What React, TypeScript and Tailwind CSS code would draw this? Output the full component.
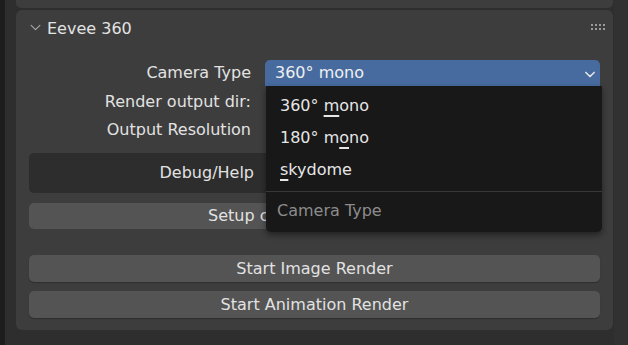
const FONT = { fontFamily: '"DejaVu Sans", "Noto Sans", sans-serif' };

const OPTIONS: { before: string; key: string; after: string }[] = [
  { before: "360° ", key: "m", after: "ono" },
  { before: "180° m", key: "o", after: "no" },
  { before: "", key: "s", after: "kydome" },
];

function Chevron({ className, width = 1.3 }: { className?: string; width?: number }) {
  return (
    <svg viewBox="0 0 12 8" className={className} fill="none" stroke="currentColor" strokeWidth={width}>
      <polyline points="1,1.5 6,6.5 11,1.5" strokeLinecap="round" strokeLinejoin="round" />
    </svg>
  );
}

function Row({ label, children }: { label: string; children?: React.ReactNode }) {
  return (
    <div className="flex h-[26px] items-center">
      <div className="w-[236px] shrink-0 pr-[14px] text-right">{label}</div>
      <div className="flex-1">{children}</div>
    </div>
  );
}

function Button({ label }: { label: string }) {
  return (
    <div className="flex h-[27px] items-center justify-center rounded-[5px] bg-[#545454] shadow-[0_1px_1px_rgba(0,0,0,0.25)]">
      {label}
    </div>
  );
}

function DragDots() {
  return (
    <div className="grid grid-cols-4 gap-[2px]">
      {Array.from({ length: 8 }).map((_, i) => (
        <div key={i} className="h-[2px] w-[2px] bg-[#9a9a9a]" />
      ))}
    </div>
  );
}

export default function App() {
  return (
    <div
      className="flex h-[345px] w-[628px] overflow-hidden bg-[#2e2e2e] text-[16px] text-[#e2e2e2]"
      style={FONT}
    >
      <div className="w-[5px] shrink-0 bg-[#1d1d1d]" />
      <div className="relative ml-[11px] flex w-[597px] flex-col gap-[2px]">
        {/* previous panel, cut off */}
        <div className="h-[8px] rounded-b-[5px] bg-[#3d3d3d]" />

        <div className="flex h-[320px] flex-col rounded-[6px] bg-[#3d3d3d] px-[13px]">
          {/* header */}
          <div className="flex h-[36px] items-center">
            <Chevron className="ml-[1px] mt-[-1px] h-[7px] w-[11px] text-[#a8a8a8]" />
            <span className="ml-[6px] pt-[1px]">Eevee 360</span>
            <div className="ml-auto mr-[-5px] mt-[-2px]">
              <DragDots />
            </div>
          </div>

          <div className="mt-[14px] flex flex-col gap-[2.5px]">
            <Row label="Camera Type">
              <div className="flex h-[26px] items-center rounded-t-[5px] bg-[#476b9f] pl-[10px] pr-[5px] text-[#f0f0f0]">
                <span>360° mono</span>
                <Chevron className="ml-auto mt-[3px] h-[7px] w-[10px] text-[#e8e8e8]" width={1.8} />
              </div>
            </Row>
            <Row label="Render output dir:" />
            <Row label="Output Resolution" />
          </div>

          <div className="mt-[10px] flex h-[40px] items-center rounded-[5px] bg-[#2d2d2d]">
            <div className="w-[225px] text-right">Debug/Help</div>
          </div>

          <div className="mt-[10px] flex h-[26px] items-center rounded-[5px] bg-[#545454]">
            <div className="w-[237px] overflow-hidden whitespace-nowrap pl-[179px]">Setup camera</div>
          </div>

          <div className="mt-[26px] flex flex-col gap-[9px]">
            <Button label="Start Image Render" />
            <Button label="Start Animation Render" />
          </div>
        </div>

        {/* open dropdown menu */}
        <div className="absolute left-[250px] top-[86px] flex h-[146px] w-[336px] flex-col rounded-b-[5px] bg-[#181818] shadow-[0_3px_6px_rgba(0,0,0,0.45)]">
          <div className="flex flex-col pt-[4px]">
            {OPTIONS.map((o) => (
              <div key={o.before + o.key} className="flex h-[32px] items-center pl-[14px] text-[#e6e6e6]">
                <span className="whitespace-pre">
                  {o.before}
                  <span className="underline decoration-[1.5px] underline-offset-[4px]">{o.key}</span>
                  {o.after}
                </span>
              </div>
            ))}
          </div>
          <div className="mt-[5px] h-px bg-[#383838]" />
          <div className="flex h-[38px] items-center pl-[11px] text-[#8c8c8c]">Camera Type</div>
        </div>
      </div>
      <div className="ml-[1px] w-[14px] shrink-0 bg-[#313131]" />
    </div>
  );
}
